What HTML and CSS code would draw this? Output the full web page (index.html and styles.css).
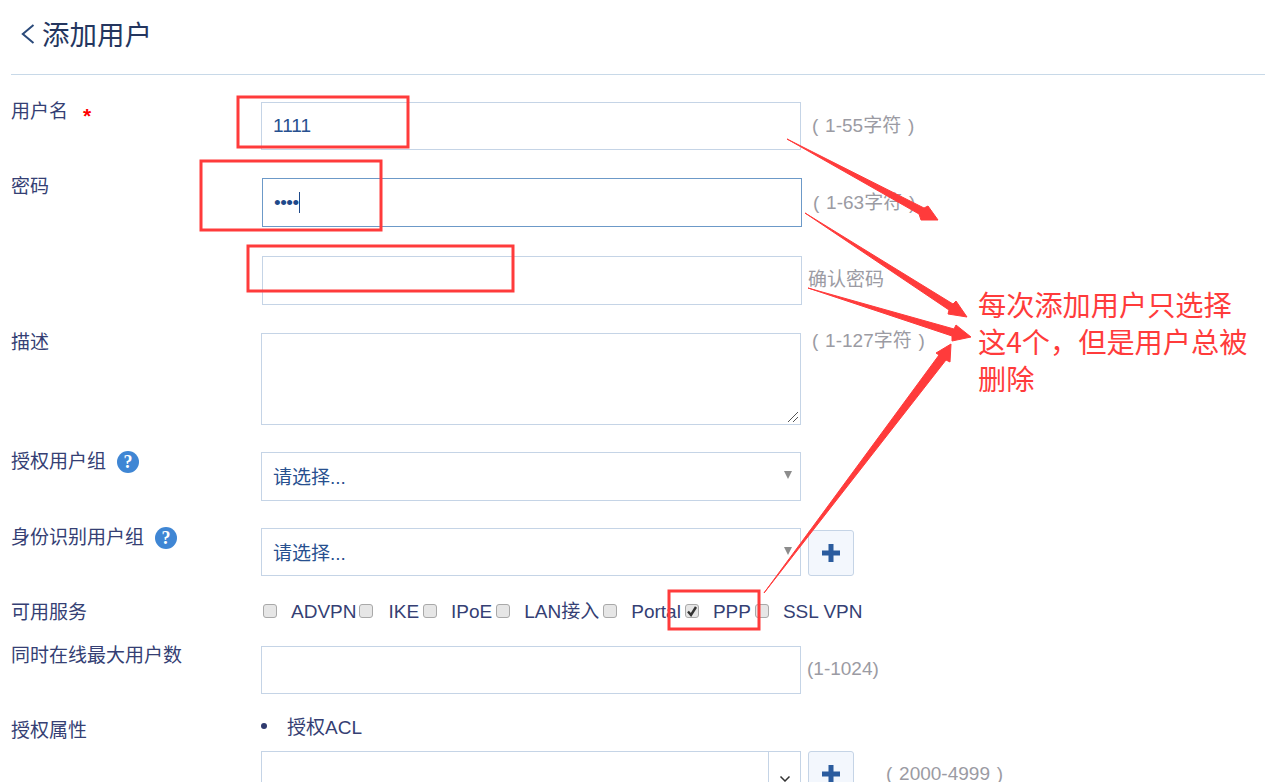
FILE: index.html
```html
<!DOCTYPE html>
<html lang="zh-CN">
<head>
<meta charset="utf-8">
<title>添加用户</title>
<link rel="stylesheet" href="styles.css">
</head>
<body>
<main class="page">
  <header class="head">
    <svg class="back" width="14" height="20" viewBox="0 0 14 20"><path d="M12.500 1 1.800 10l10.700 9" fill="none" stroke="#2b4a7a" stroke-width="2"/></svg>
    <h1 class="title">添加用户</h1>
  </header>

  <form class="form">
    <div class="row r-user">
      <div class="lab">用户名<span class="star">*</span></div>
      <div class="field"><div class="box h48 val">1111</div></div>
      <div class="hint hint-char">( 1-55字符 )</div>
    </div>
    <div class="row r-pass">
      <div class="lab">密码</div>
      <div class="field shift"><div class="box h49 focus val"><span class="dots">••••</span><span class="caret"></span></div></div>
      <div class="hint hint-char">( 1-63字符 )</div>
    </div>
    <div class="row r-conf">
      <div class="lab"></div>
      <div class="field shift"><div class="box h49"></div></div>
      <div class="hint hint-conf">确认密码</div>
    </div>
    <div class="row r-desc">
      <div class="lab">描述</div>
      <div class="field"><div class="box h92">
        <svg class="grip" width="12" height="12" viewBox="0 0 12 12"><path d="M1 11 11 1M6 11l5-5" stroke="#555" stroke-width="1" fill="none"/></svg>
      </div></div>
      <div class="hint hint-desc">( 1-127字符 )</div>
    </div>
    <div class="row r-grp">
      <div class="lab">授权用户组<span class="help">?</span></div>
      <div class="field"><div class="box h49 val sel">请选择...<span class="tri"></span></div></div>
    </div>
    <div class="row r-ident">
      <div class="lab">身份识别用户组<span class="help">?</span></div>
      <div class="field"><div class="box h48 val sel">请选择...<span class="tri"></span></div></div>
      <button type="button" class="plus"><svg width="18" height="18" viewBox="0 0 18 18"><path d="M9 0v18M0 9h18" stroke="#2b5c9e" stroke-width="5" fill="none"/></svg></button>
    </div>
    <div class="row r-svc">
      <div class="lab">可用服务</div>
      <div class="svcs">
        <label class="svc"><span class="cb"></span>ADVPN</label>
        <label class="svc"><span class="cb"></span>IKE</label>
        <label class="svc"><span class="cb"></span>IPoE</label>
        <label class="svc"><span class="cb"></span>LAN接入</label>
        <label class="svc"><span class="cb"></span>Portal</label>
        <label class="svc"><span class="cb"><svg width="12" height="12" viewBox="0 0 12 12"><path d="M2 6.500 5 10l5-8" fill="none" stroke="#333" stroke-width="2.400"/></svg></span>PPP</label>
        <label class="svc"><span class="cb"></span>SSL VPN</label>
      </div>
    </div>
    <div class="row r-max">
      <div class="lab">同时在线最大用户数</div>
      <div class="field"><div class="box h48"></div></div>
      <div class="hint hint-max">(1-1024)</div>
    </div>
    <div class="row r-attr">
      <div class="lab">授权属性</div>
      <div class="attr">
        <div class="acl"><span class="dot"></span>授权ACL</div>
        <div class="attr-row">
          <div class="box h48 combo"><span class="combo-btn"><svg width="12" height="8" viewBox="0 0 12 8"><path d="M1.500 1.500 6 6l4.500-4.500" fill="none" stroke="#333" stroke-width="1.500"/></svg></span></div>
          <button type="button" class="plus plus-top"><svg width="18" height="18" viewBox="0 0 18 18"><path d="M9 0v18M0 9h18" stroke="#2b5c9e" stroke-width="5" fill="none"/></svg></button>
          <div class="hint hint-acl">( 2000-4999 )</div>
        </div>
      </div>
    </div>
  </form>

  <svg class="marks" width="1265" height="782" viewBox="0 0 1265 782">
    <g fill="none" stroke="#ff3b3b" stroke-width="3">
      <rect x="238" y="97" width="170" height="50"/>
      <rect x="201" y="161" width="180" height="69"/>
      <rect x="248" y="246" width="265" height="45"/>
      <rect x="669" y="591" width="90" height="38"/>
    </g>
    <g fill="#ff3b3b" stroke="#ff3b3b" stroke-width="1" stroke-linejoin="round">
      <path d="M787 139 924 208 928 206 938 220 921 220 919 214Z"/>
      <path d="M805 213 953 304 956 301 967 317 948 314 949 310Z"/>
      <path d="M808 288 954 329 956 325 971 337 952 341 952 336Z"/>
      <path d="M764 593 939 355 936 353 951 344 950 362 946 360Z"/>
    </g>
  </svg>
  <div class="note">每次添加用户只选择<br>这4个，但是用户总被<br>删除</div>
</main>
</body>
</html>
```
FILE: styles.css
```css
html, body {
  margin: 0;
  padding: 0;
  background: #fff;
}
body {
  height: 782px;
  overflow: hidden;
  font-family: "Liberation Sans", "Noto Sans CJK SC", sans-serif;
  font-size: 19px;
  color: #353f74;
}
.page {
  position: relative;
  height: 782px;
  padding-left: 11px;
  overflow: hidden;
}
.head {
  display: flex;
  align-items: center;
  gap: 7px;
  height: 74px;
  padding-left: 10px;
  padding-bottom: 9px;
  box-sizing: border-box;
}
.back {
  margin-top: 2px;
}
.form {
  border-top: 1px solid #c8d9e8;
}
.title {
  margin: 0;
  font-size: 27.500px;
  font-weight: 400;
  color: #24365f;
}
.row {
  display: flex;
  align-items: flex-start;
}
.lab {
  flex: none;
  width: 250px;
  line-height: 20px;
  white-space: nowrap;
  display: flex;
  align-items: center;
}
.field {
  flex: none;
  width: 540px;
  padding-top: 2px;
}
.shift {
  margin-left: 1px;
}
.box {
  box-sizing: border-box;
  width: 100%;
  border: 1px solid #c5d4e6;
  background: #fff;
  position: relative;
}
.h48 { height: 48px; }
.h49 { height: 49px; }
.h92 { height: 92px; }
.val {
  display: flex;
  align-items: center;
  padding-left: 11px;
  font-size: 19px;
  color: #27508f;
}
.focus {
  border-color: #6c99c8;
}
.dots {
  font-size: 19px;
  letter-spacing: -0.500px;
  color: #1f4a8a;
}
.caret {
  width: 1px;
  height: 21px;
  margin-left: 0;
  background: #1f4a8a;
}
.hint {
  color: #9b9ba3;
  font-size: 19px;
  word-spacing: 1.500px;
  white-space: nowrap;
  line-height: 20px;
}
.hint-char { margin-left: 11px; padding-top: 16px; }
.r-pass .hint-char { padding-top: 17px; }
.hint-conf { margin-left: 6px; padding-top: 16px; }
.hint-desc { margin-left: 11px; padding-top: 0; }
.hint-max { margin-left: 6px; padding-top: 15px; }
.hint-acl { margin-left: 32px; padding-top: 14px; line-height: 17px; }
.star {
  color: #f00;
  margin-left: 15px;
  font-weight: 700;
  font-size: 21px;
  position: relative;
  top: 4px;
}
.help {
  width: 22px;
  height: 22px;
  margin-left: 11px;
  border-radius: 50%;
  background: #3f86d4;
  color: #fff;
  font-family: "Liberation Serif", serif;
  font-weight: 700;
  font-size: 18px;
  line-height: 22px;
  text-align: center;
}
.sel {
  padding-right: 30px;
  padding-bottom: 2px;
}
.tri {
  position: absolute;
  right: 8px;
  top: 18px;
  border-left: 4px solid transparent;
  border-right: 4px solid transparent;
  border-top: 8px solid #8c8c8c;
}
.grip {
  position: absolute;
  right: 1px;
  bottom: 1px;
}
.plus {
  flex: none;
  box-sizing: border-box;
  width: 46px;
  height: 46px;
  margin: 4px 0 0 7px;
  padding: 0;
  border: 1px solid #c5d4e6;
  border-radius: 3px;
  background: #f3f7fd;
  display: flex;
  align-items: center;
  justify-content: center;
}
.plus-top {
  margin-top: 0;
}
.r-user { margin-top: 25px; }
.r-user .lab { margin-top: 2px; }
.r-pass { margin-top: 26px; }
.r-pass .lab { margin-top: 1px; }
.r-conf { margin-top: 27px; }
.r-desc { margin-top: 26px; }
.r-desc .lab { margin-top: 2px; }
.r-grp { margin-top: 25px; }
.r-grp .lab { margin-top: 1px; }
.r-ident { margin-top: 25px; }
.r-ident .lab { margin-top: 1px; }
.r-svc { margin-top: 26px; }
.r-svc .lab { margin-top: 1px; }
.svcs {
  display: flex;
  gap: 4px;
  margin-left: 2px;
  font-size: 19px;
  line-height: 20px;
}
.svc {
  display: flex;
  align-items: center;
  white-space: nowrap;
}
.svc:first-child {
  margin-right: -1px;
}
.svc:nth-child(2) .cb {
  margin-right: 15px;
}
.cb {
  flex: none;
  box-sizing: border-box;
  width: 14px;
  height: 14px;
  margin-right: 14px;
  margin-bottom: 2px;
  border: 1px solid #a9a9a9;
  border-radius: 3px;
  background: #e6e6e6;
  display: flex;
  align-items: center;
  justify-content: center;
}
.r-max { margin-top: 21px; }
.r-max .lab { margin-top: 2px; }
.r-attr { margin-top: 27px; }
.attr {
  flex: none;
  width: 740px;
  margin-top: -6px;
}
.acl {
  display: flex;
  align-items: center;
  height: 20px;
}
.dot {
  width: 6px;
  height: 6px;
  margin: 2px 20px 0 0;
  border-radius: 50%;
  background: #2f3a6e;
}
.attr-row {
  display: flex;
  align-items: flex-start;
  margin-top: 16px;
}
.combo {
  width: 540px;
  flex: none;
}
.combo-btn {
  position: absolute;
  right: 0;
  top: 0;
  bottom: 0;
  width: 32px;
  border-left: 1px solid #c5d4e6;
  display: flex;
  align-items: center;
  justify-content: center;
  padding-top: 8px;
  box-sizing: border-box;
}
.marks {
  position: absolute;
  left: 0;
  top: 0;
  pointer-events: none;
}
.note {
  position: absolute;
  left: 978px;
  top: 285px;
  font-family: "Noto Sans CJK SC", sans-serif;
  font-size: 28.200px;
  line-height: 37px;
  color: #ff3b3b;
  white-space: nowrap;
}
```
